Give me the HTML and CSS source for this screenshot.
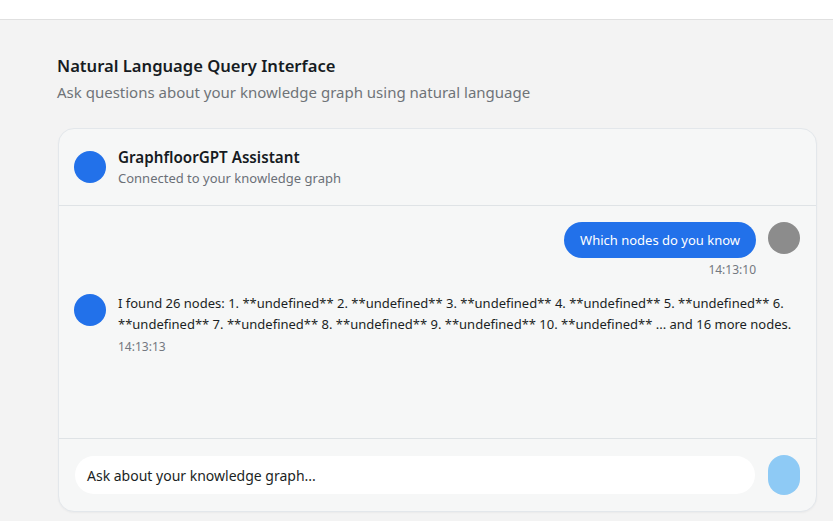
FILE: index.html
```html
<!DOCTYPE html>
<html>
<head>
<meta charset="utf-8">
<link rel="stylesheet" href="styles.css">
</head>
<body>
<div class="topbar"></div>
<main class="page">
  <h1 class="title">Natural Language Query Interface</h1>
  <p class="subtitle">Ask questions about your knowledge graph using natural language</p>
  <section class="card">
    <header class="card-head">
      <div class="avatar bot"></div>
      <div class="head-text">
        <div class="name">GraphfloorGPT Assistant</div>
        <div class="status">Connected to your knowledge graph</div>
      </div>
    </header>
    <div class="messages">
      <div class="msg user">
        <div class="msg-body">
          <div class="bubble">Which nodes do you know</div>
          <div class="time">14:13:10</div>
        </div>
        <div class="avatar person"></div>
      </div>
      <div class="msg bot-msg">
        <div class="avatar bot"></div>
        <div class="msg-body">
          <div class="bot-text">I found 26 nodes: 1. **undefined** 2. **undefined** 3. **undefined** 4. **undefined** 5. **undefined** 6. **undefined** 7. **undefined** 8. **undefined** 9. **undefined** 10. **undefined** ... and 16 more nodes.</div>
          <div class="time">14:13:13</div>
        </div>
      </div>
    </div>
    <footer class="composer">
      <div class="input">Ask about your knowledge graph...</div>
      <button class="send"></button>
    </footer>
  </section>
</main>
</body>
</html>
```

FILE: styles.css
```css
* { box-sizing: border-box; }
html, body { margin: 0; padding: 0; }
body {
  background: #f3f3f3;
  font-family: "Noto Sans", "Open Sans", sans-serif;
  color: #1f2328;
  height: 521px;
  overflow: hidden;
}
.topbar {
  height: 20px;
  background: #ffffff;
  border-bottom: 1px solid #e0e0e0;
}
.page {
  padding: 34px 16px 0 57px;
}
.title {
  margin: 0;
  font-size: 16.6px;
  font-weight: 600;
  line-height: 24px;
  color: #161b22;
}
.subtitle {
  margin: 3px 0 0;
  font-size: 15px;
  line-height: 22px;
  color: #6f7378;
}
.card {
  margin-top: 25px;
  margin-left: 1px;
  height: 384px;
  background: #f6f7f7;
  border: 1px solid #e3e7eb;
  border-radius: 16px;
  display: flex;
  flex-direction: column;
  box-shadow: 0 1px 2px rgba(0,0,0,0.04);
}
.card-head {
  display: flex;
  align-items: center;
  gap: 12px;
  padding: 0 15px;
  height: 77px;
  flex: none;
  border-bottom: 1px solid #dfe3e6;
}
.avatar {
  width: 32px;
  height: 32px;
  border-radius: 50%;
  flex: none;
}
.avatar.bot { background: #2271ea; }
.avatar.person { background: #8c8c8c; }
.name {
  font-size: 15.2px;
  font-weight: 600;
  line-height: 20px;
  color: #161b22;
}
.status {
  font-size: 13px;
  line-height: 18px;
  color: #6b7077;
  margin-top: 2px;
}
.messages {
  flex: 1;
  padding: 16px 16px 16px 15px;
  display: flex;
  flex-direction: column;
  gap: 16px;
}
.msg { display: flex; gap: 12px; }
.msg.user { justify-content: flex-end; }
.msg.user .msg-body { display: flex; flex-direction: column; align-items: flex-end; }
.bubble {
  background: #2271ea;
  color: #ffffff;
  font-size: 13px;
  line-height: 20px;
  padding: 8px 16px;
  border-radius: 18px;
}
.time {
  font-size: 12px;
  line-height: 16px;
  color: #737880;
  margin-top: 4px;
}
.bot-msg .msg-body { flex: 1; }
.bot-text {
  font-size: 13px;
  line-height: 21px;
  color: #1b1f24;
  margin-top: -1px;
}
.bot-msg .time { margin-top: 4px; }
.composer {
  height: 73px;
  flex: none;
  border-top: 1px solid #dfe3e6;
  display: flex;
  align-items: center;
  gap: 13px;
  padding: 0 16px;
}
.input {
  flex: 1;
  height: 38px;
  background: #ffffff;
  border-radius: 19px;
  display: flex;
  align-items: center;
  padding: 0 12px;
  font-size: 14px;
  color: #1b1f24;
}
.send {
  width: 32px;
  height: 40px;
  border: none;
  border-radius: 16px;
  background: #8ecaf5;
  padding: 0;
}
```
